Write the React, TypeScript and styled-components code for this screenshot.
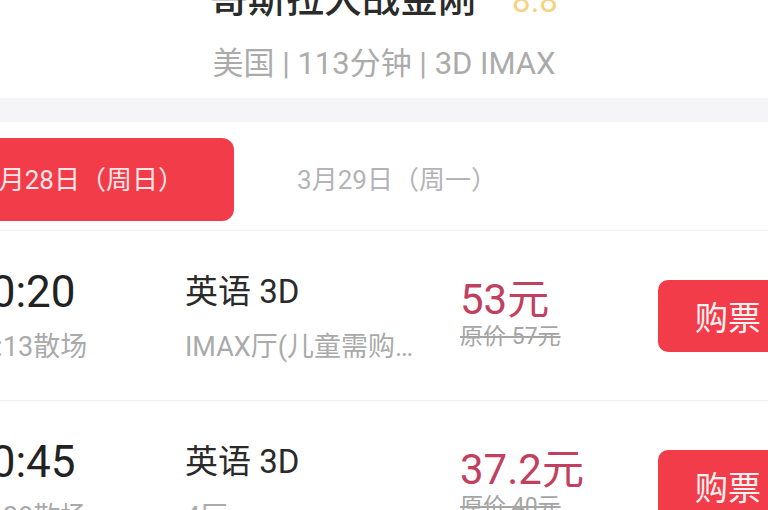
import React from "react";
import styled, { createGlobalStyle } from "styled-components";

const GlobalStyle = createGlobalStyle`
  html, body {
    margin: 0;
    padding: 0;
    background: #ffffff;
    overflow: hidden;
  }
  body {
    font-family: Roboto, "Noto Sans CJK SC", sans-serif;
  }
`;

const Viewport = styled.div`
  width: 768px;
  height: 510px;
  overflow: hidden;
`;

/* the shot is a crop of a wider page, so the page sits a bit off to the left */
const Page = styled.div`
  width: 900px;
  margin-left: -66px;
  background: #ffffff;
`;

const Header = styled.header`
  display: flex;
  flex-direction: column;
  align-items: center;
  padding-bottom: 14px;
`;

const TitleLine = styled.div`
  display: flex;
  align-items: baseline;
  gap: 36px;
  margin-top: -24px;
  height: 40px;
  line-height: 40px;
`;

const Title = styled.h1`
  margin: 0;
  font-size: 38px;
  font-weight: 500;
  color: #2b2b2b;
  font-family: "Noto Sans CJK SC", sans-serif;
`;

const Score = styled.span`
  font-size: 33px;
  color: #f5d27e;
`;

const Meta = styled.div`
  margin-top: 28px;
  font-size: 31px;
  line-height: 40px;
  color: #ababab;
`;

const Band = styled.div`
  height: 24px;
  background: #f5f5f7;
`;

const Tabs = styled.nav`
  display: flex;
  gap: 13px;
  padding: 16px 0 9px;
  border-bottom: 1px solid #f1f1f3;
`;

const Tab = styled.div<{ $active?: boolean }>`
  width: 300px;
  height: 83px;
  box-sizing: border-box;
  padding-bottom: 5px;
  display: flex;
  align-items: center;
  justify-content: center;
  border-radius: 12px;
  font-size: 26px;
  background: ${(p) => (p.$active ? "#f33c49" : "transparent")};
  color: ${(p) => (p.$active ? "#ffe6e8" : "#b3b3b9")};
`;

const Row = styled.div`
  height: 169px;
  display: flex;
  align-items: center;
  padding-left: 32px;
  border-bottom: 1px solid #f1f1f3;
`;

const TimeCol = styled.div`
  width: 219px;
  display: flex;
  flex-direction: column;
  gap: 14px;
`;

const Time = styled.div`
  font-size: 44px;
  line-height: 48px;
  color: #222222;
`;

const Sub = styled.div`
  font-size: 27px;
  line-height: 34px;
  color: #aaaaaa;
  white-space: nowrap;
`;

const InfoCol = styled.div`
  width: 275px;
  display: flex;
  flex-direction: column;
  gap: 14px;
`;

const Lang = styled.div`
  font-size: 33px;
  line-height: 48px;
  color: #2a2a2a;
`;

const Hall = styled(Sub)`
  overflow: hidden;
  text-overflow: ellipsis;
  width: 236px;
`;

const PriceCol = styled.div`
  width: 198px;
  display: flex;
  flex-direction: column;
  padding-bottom: 6px;
`;

const Price = styled.div`
  font-size: 42px;
  line-height: 48px;
  color: #c23f60;
`;

const OldPrice = styled.div`
  font-size: 23px;
  line-height: 26px;
  color: #a5a5a5;
  text-decoration: line-through;
`;

const BuyButton = styled.button`
  width: 150px;
  height: 72px;
  border: none;
  border-radius: 10px;
  background: #f33c49;
  color: #fff2f3;
  font-size: 33px;
  font-family: "Noto Sans CJK SC", sans-serif;
  text-align: left;
  padding-left: 37px;
`;

type Session = {
  time: string;
  end: string;
  lang: string;
  hall: string;
  price: string;
  old: string;
};

const sessions: Session[] = [
  {
    time: "10:20",
    end: "12:13散场",
    lang: "英语 3D",
    hall: "IMAX厅(儿童需购票)",
    price: "53元",
    old: "原价 57元",
  },
  {
    time: "10:45",
    end: "12:38散场",
    lang: "英语 3D",
    hall: "4厅",
    price: "37.2元",
    old: "原价 40元",
  },
];

export default function App() {
  return (
    <Viewport>
      <GlobalStyle />
      <Page>
        <Header>
          <TitleLine>
            <Title>哥斯拉大战金刚</Title>
            <Score>8.8</Score>
          </TitleLine>
          <Meta>美国 | 113分钟 | 3D IMAX</Meta>
        </Header>
        <Band />
        <Tabs>
          <Tab $active>3月28日（周日）</Tab>
          <Tab>3月29日（周一）</Tab>
        </Tabs>
        {sessions.map((s) => (
          <Row key={s.time}>
            <TimeCol>
              <Time>{s.time}</Time>
              <Sub>{s.end}</Sub>
            </TimeCol>
            <InfoCol>
              <Lang>{s.lang}</Lang>
              <Hall>{s.hall}</Hall>
            </InfoCol>
            <PriceCol>
              <Price>{s.price}</Price>
              <OldPrice>{s.old}</OldPrice>
            </PriceCol>
            <BuyButton>购票</BuyButton>
          </Row>
        ))}
      </Page>
    </Viewport>
  );
}
